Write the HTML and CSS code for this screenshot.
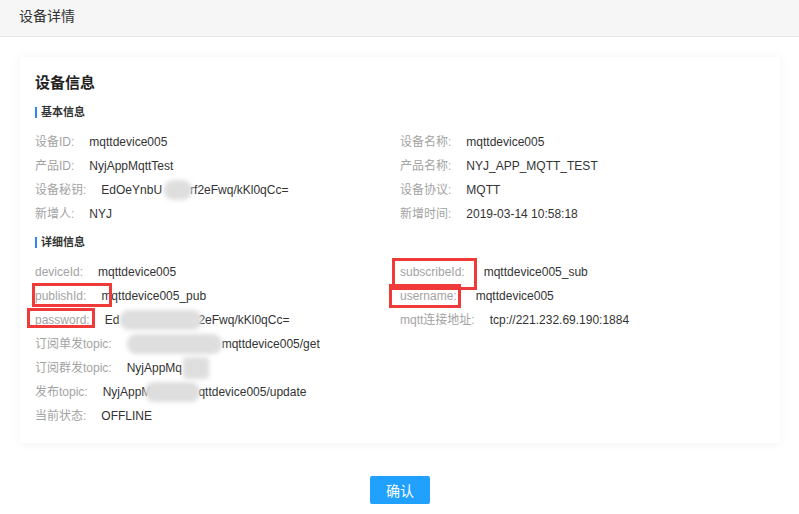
FILE: index.html
```html
<!DOCTYPE html>
<html lang="zh-CN">
<head>
<meta charset="utf-8">
<title>设备详情</title>
<link rel="stylesheet" href="styles.css">
</head>
<body>
<div class="page">
  <div class="header">设备详情</div>
  <div class="main">
    <div class="card">
      <div class="card-title">设备信息</div>
      <div class="sub-title">基本信息</div>
      <div class="cols">
        <div class="col">
          <div class="row"><span class="lbl">设备ID:</span><span class="val">mqttdevice005</span></div>
          <div class="row"><span class="lbl">产品ID:</span><span class="val">NyjAppMqttTest</span></div>
          <div class="row"><span class="lbl">设备秘钥:</span><span class="val">EdOeYnbU<span class="blob b1"></span>rf2eFwq/kKl0qCc=</span></div>
          <div class="row"><span class="lbl">新增人:</span><span class="val">NYJ</span></div>
        </div>
        <div class="col">
          <div class="row"><span class="lbl">设备名称:</span><span class="val">mqttdevice005</span></div>
          <div class="row"><span class="lbl">产品名称:</span><span class="val">NYJ_APP_MQTT_TEST</span></div>
          <div class="row"><span class="lbl">设备协议:</span><span class="val">MQTT</span></div>
          <div class="row"><span class="lbl">新增时间:</span><span class="val">2019-03-14 10:58:18</span></div>
        </div>
      </div>
      <div class="sub-title second">详细信息</div>
      <div class="cols">
        <div class="col">
          <div class="row"><span class="lbl">deviceId:</span><span class="val">mqttdevice005</span></div>
          <div class="row"><span class="lbl">publishId:</span><span class="val">mqttdevice005_pub</span></div>
          <div class="row"><span class="lbl">password:</span><span class="val">Ed<span class="blob b2"></span>2eFwq/kKl0qCc=</span></div>
          <div class="row"><span class="lbl">订阅单发topic:</span><span class="val"><span class="blob b3"></span>mqttdevice005/get</span></div>
          <div class="row"><span class="lbl">订阅群发topic:</span><span class="val">NyjAppMq<span class="blob b4"></span></span></div>
          <div class="row"><span class="lbl">发布topic:</span><span class="val">NyjAppM<span class="blob b5"></span>qttdevice005/update</span></div>
          <div class="row"><span class="lbl">当前状态:</span><span class="val">OFFLINE</span></div>
        </div>
        <div class="col">
          <div class="row"><span class="lbl wide">subscribeId:</span><span class="val">mqttdevice005_sub</span></div>
          <div class="row"><span class="lbl wide">username:</span><span class="val">mqttdevice005</span></div>
          <div class="row"><span class="lbl">mqtt连接地址:</span><span class="val">tcp://221.232.69.190:1884</span></div>
        </div>
      </div>
    </div>
    <div class="actions"><button class="btn">确认</button></div>
  </div>
  <div class="mark m-sub"></div>
  <div class="mark m-user"></div>
  <div class="mark m-pub"></div>
  <div class="mark m-pwd"></div>
</div>
</body>
</html>
```
FILE: styles.css
```css
* { box-sizing: border-box; }
html, body { margin: 0; padding: 0; background: #fff; }
body {
  font-family: "Liberation Sans", "Noto Sans CJK SC", sans-serif;
  font-size: 12px;
  color: #333;
}
.page { position: relative; width: 799px; height: 514px; overflow: hidden; }
.header {
  height: 37px;
  line-height: 33px;
  padding-left: 19px;
  font-size: 14px;
  color: #333;
  background: #f6f6f6;
  border-bottom: 1px solid #e8e8e8;
}
.main { padding: 20px 19px 0 20px; }
.card {
  background: #fff;
  box-shadow: 0 0 10px rgba(0, 0, 0, 0.06);
  padding: 16px 15px 15px 15px;
}
.card-title {
  font-size: 15px;
  font-weight: bold;
  line-height: 20px;
  color: #222;
}
.sub-title {
  margin-top: 12px;
  font-size: 11px;
  font-weight: bold;
  line-height: 14px;
  color: #333;
  display: flex;
  align-items: center;
}
.sub-title::before {
  content: "";
  width: 2px;
  height: 11px;
  background: #2e86f0;
  margin-right: 4px;
}
.sub-title.second { margin-top: 9px; }
.cols { display: grid; grid-template-columns: 1fr 1fr; margin-top: 11px; }
.row { height: 24px; line-height: 24px; white-space: nowrap; display: flex; align-items: center; }
.lbl { color: #a3a3a3; margin-right: 15px; }
.lbl.wide { margin-right: 19px; }
.val { color: #333; display: inline-flex; align-items: center; }
.blob {
  display: inline-block;
  height: 20px;
  background: #dedede;
  border-radius: 9px;
  filter: blur(2px);
}
.b1 { width: 28px; margin: 0 -2px 0 2px; }
.b2 { width: 82px; margin: 0 -4px 0 1px; }
.b3 { width: 95px; margin-left: 0; }
.b4 { width: 26px; height: 22px; border-radius: 4px; margin-left: 1px; }
.b5 { width: 55px; margin: 0 -2px 0 -6px; }
.actions { display: flex; justify-content: center; margin-top: 33px; }
.btn {
  width: 60px;
  height: 28px;
  border: 0;
  border-radius: 2px;
  background: #20a0ff;
  color: #fff;
  font-family: "Noto Sans CJK SC", sans-serif;
  font-size: 14px;
  padding: 0;
}
.mark { position: absolute; border: 3px solid #f03a3a; }
.m-sub { left: 392px; top: 258px; width: 85px; height: 32px; }
.m-user { left: 389px; top: 284px; width: 72px; height: 24px; }
.m-pub { left: 32px; top: 283px; width: 80px; height: 24px; }
.m-pwd { left: 27px; top: 308px; width: 68px; height: 20px; }
```
